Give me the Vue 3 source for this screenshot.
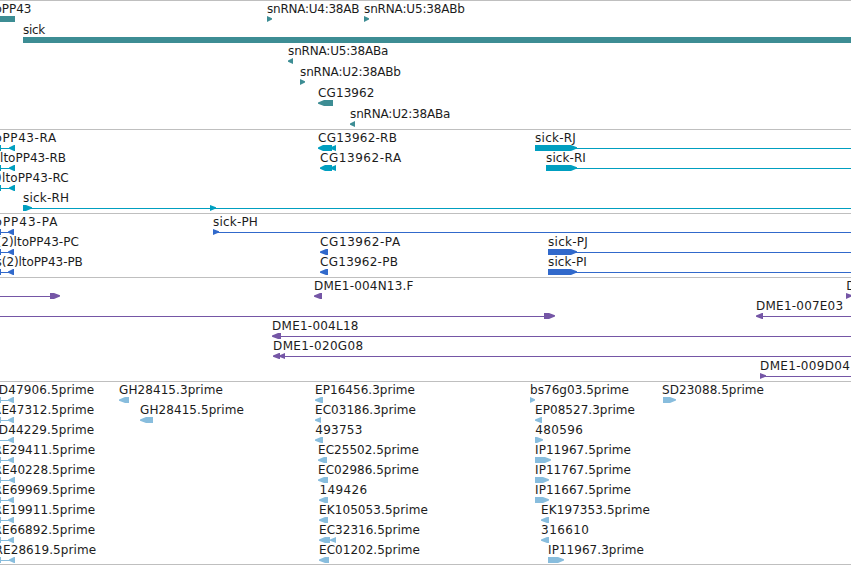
<template>
    <main class="browser">
        <section v-for="track in tracks" :key="track.name" class="track" :class="track.name">
            <svg :width="WIDTH" :height="track.height" :viewBox="`0 ${track.top} ${WIDTH} ${track.height}`">
                <g v-for="(f, i) in track.features" :key="i">
                    <path v-for="(s, j) in f.shapes" :key="j" :d="shapePath(s, track.base + f.row * track.pitch)" />
                    <text
                        v-if="f.label"
                        :x="f.from - 0.4"
                        :y="track.base + f.row * track.pitch"
                        :textLength="f.to - f.from + 0.8"
                    >{{ f.label }}</text>
                </g>
            </svg>
        </section>
    </main>
</template>

<script setup>
const WIDTH = 851

// shapes: [type, start, end, head length]
// types: box | line | right | left
const feature = (row, label, from, to, ...shapes) => ({ row, label, from, to, shapes })

// intron line that enters from the left edge
const tail = (end) => [['box', 0, 1], ['line', 0, end - 5], ['left', end - 6, end, 5]]

function shapePath([type, a, b, head = 4], baseline) {
    const top = baseline + 3
    const bottom = top + 6
    const mid = top + 3
    if (type === 'line') return `M${a} ${mid}H${b}V${mid + 1}H${a}Z`
    if (type === 'right') return `M${a} ${top}H${b - head}L${b} ${mid - 0.8}V${mid + 0.4}L${b - head} ${bottom}H${a}Z`
    if (type === 'left') return `M${b} ${top}H${a + head}L${a} ${mid - 0.4}V${mid + 0.8}L${a + head} ${bottom}H${b}Z`
    return `M${a} ${top}H${b}V${bottom}H${a}Z`
}

const tracks = [
    {
        name: 'genes', top: 1, height: 128, base: 13, pitch: 21,
        features: [
            feature(0, 'oPP43', -5, 31, ['box', 0, 15]),
            feature(0, 'snRNA:U4:38AB', 267.5, 359, ['right', 267, 272, 5]),
            feature(0, 'snRNA:U5:38ABb', 364.5, 464.5, ['right', 364, 369, 5]),
            feature(1, 'sick', 23.5, 44.7, ['box', 23, WIDTH]),
            feature(2, 'snRNA:U5:38ABa', 288.5, 388, ['left', 288, 293, 5]),
            feature(3, 'snRNA:U2:38ABb', 300.5, 400.5, ['right', 300, 305, 5]),
            feature(4, 'CG13962', 318.5, 374, ['left', 318, 333, 6]),
            feature(5, 'snRNA:U2:38ABa', 350.5, 450, ['left', 350, 355, 5]),
        ],
    },
    {
        name: 'transcripts', top: 130, height: 83, base: 142, pitch: 20,
        features: [
            feature(0, 'oPP43-RA', -5, 55.7, ...tail(15)),
            feature(1, 'ltoPP43-RB', 0.5, 65.6, ...tail(15)),
            feature(2, ')ltoPP43-RC', -2.5, 68.3, ...tail(15)),
            feature(3, 'sick-RH', 23.5, 68.7, ['right', 23, 32, 6], ['line', 30, WIDTH], ['right', 210, 216, 6]),
            feature(0, 'CG13962-RB', 318.5, 396.5, ['left', 318, 332, 5], ['left', 330, 336, 6]),
            feature(1, 'CG13962-RA', 320.5, 400.7, ['left', 320, 332, 5], ['left', 330, 336, 6]),
            feature(0, 'sick-RJ', 535.5, 575.5, ['right', 535, 577, 6], ['line', 575, WIDTH]),
            feature(1, 'sick-RI', 546.5, 585.5, ['right', 546, 577, 6], ['line', 575, WIDTH]),
        ],
    },
    {
        name: 'proteins', top: 214, height: 63, base: 226, pitch: 20,
        features: [
            feature(0, 'oPP43-PA', -5, 57, ...tail(14)),
            feature(1, '(2)ltoPP43-PC', -3, 78.4, ...tail(14)),
            feature(2, 's(2)ltoPP43-PB', -4, 82.4, ...tail(14)),
            feature(0, 'sick-PH', 213.5, 257.5, ['right', 213, 219, 6], ['line', 217, WIDTH]),
            feature(1, 'CG13962-PA', 320.5, 399.7, ['left', 320, 328, 6]),
            feature(2, 'CG13962-PB', 320.5, 397.5, ['left', 320, 328, 6]),
            feature(1, 'sick-PJ', 548.5, 587.5, ['right', 548, 577, 6], ['line', 575, WIDTH]),
            feature(2, 'sick-PI', 548.5, 586.5, ['right', 548, 577, 6], ['line', 575, WIDTH]),
        ],
    },
    {
        name: 'bacs', top: 278, height: 103, base: 290, pitch: 20,
        features: [
            feature(0, '', 0, 0, ['line', 0, 51], ['right', 50, 60, 6]),
            feature(0, 'DME1-004N13.F', 314.5, 413, ['left', 314, 322, 6]),
            feature(0, 'D', 846.7, 855, ['right', 846, 852, 6]),
            feature(1, '', 0, 0, ['line', 0, 545], ['right', 544, 555, 6]),
            feature(1, 'DME1-007E03', 756.5, 842.7, ['left', 756, 763, 6], ['line', 762, WIDTH]),
            feature(2, 'DME1-004L18', 272.5, 358, ['left', 272, 281, 6], ['line', 280, WIDTH]),
            feature(3, 'DME1-020G08', 273.5, 362.7, ['left', 273, 280, 6], ['left', 279, 285, 6], ['line', 283, WIDTH]),
            feature(4, 'DME1-009D04', 760.5, 849.5, ['right', 760, 766, 6], ['line', 764, WIDTH]),
        ],
    },
    {
        name: 'ests', top: 382, height: 182, base: 394, pitch: 20,
        features: [
            feature(0, 'D47906.5prime', -0.8, 93.7, ...tail(14)),
            feature(1, 'RE47312.5prime', -6.5, 93.7, ...tail(14)),
            feature(2, 'D44229.5prime', -0.8, 93.7, ['line', 0, 9], ['left', 8, 14, 5]),
            feature(3, 'RE29411.5prime', -6, 94.7, ...tail(14)),
            feature(4, 'RE40228.5prime', -6, 94.7, ...tail(15)),
            feature(5, 'RE69969.5prime', -6, 94.7, ...tail(14)),
            feature(6, 'RE19911.5prime', -6, 94.7, ...tail(14)),
            feature(7, 'RE66892.5prime', -6, 94.7, ...tail(14)),
            feature(8, 'RE28619.5prime', -5, 95.7, ...tail(15)),

            feature(0, 'GH28415.3prime', 119.5, 222.5, ['left', 119, 129, 6]),
            feature(1, 'GH28415.5prime', 140.5, 243.5, ['left', 140, 153, 6]),

            feature(0, 'EP16456.3prime', 315.5, 414.5, ['left', 315, 323, 6]),
            feature(1, 'EC03186.3prime', 315.5, 415.5, ['left', 315, 321, 6]),
            feature(2, '493753', 315.7, 362, ['left', 315, 323, 6]),
            feature(3, 'EC25502.5prime', 318.5, 418.5, ['left', 318, 327, 6]),
            feature(4, 'EC02986.5prime', 318.5, 418.5, ['left', 318, 328, 6]),
            feature(5, '149426', 320, 366.7, ['left', 319, 328, 6]),
            feature(6, 'EK105053.5prime', 319.5, 427.5, ['left', 319, 328, 6]),
            feature(7, 'EC32316.5prime', 319.5, 419.5, ['left', 319, 330, 6], ['left', 330, 336, 6]),
            feature(8, 'EC01202.5prime', 319.5, 419.5, ['left', 319, 329, 6]),

            feature(0, 'bs76g03.5prime', 530.5, 628.5, ['right', 530, 535, 5]),
            feature(1, 'EP08527.3prime', 535.5, 634.5, ['left', 535, 542, 6]),
            feature(2, '480596', 535.7, 582.5, ['right', 535, 543, 6]),
            feature(3, 'IP11967.5prime', 535.5, 630.5, ['right', 535, 551, 6]),
            feature(4, 'IP11767.5prime', 535.5, 630.5, ['right', 535, 549, 6]),
            feature(5, 'IP11667.5prime', 535.5, 630.5, ['right', 535, 549, 6]),
            feature(6, 'EK197353.5prime', 541.5, 649.5, ['left', 541, 549, 6]),
            feature(7, '316610', 541.5, 588.5, ['left', 541, 549, 6]),
            feature(8, 'IP11967.3prime', 548.5, 643.5, ['right', 548, 564, 6]),

            feature(0, 'SD23088.5prime', 662.5, 763.5, ['right', 663, 676, 6]),
        ],
    },
]
</script>

<style>
body {
    margin: 0;
    background: #fff;
}
</style>

<style scoped>
.browser {
    display: flex;
    flex-direction: column;
    width: 851px;
    height: 565px;
    overflow: hidden;
    background: #fff;
}

.track {
    flex: none;
    border-top: 1px solid #bfbfbf;
}

.track:last-child {
    border-bottom: 1px solid #bfbfbf;
}

.track svg {
    display: block;
    overflow: hidden;
}

.track text {
    font-family: "DejaVu Sans", "Noto Sans", sans-serif;
    font-size: 12px;
    fill: #1c1c1c;
}

/* colores por pista */
.genes {
    fill: #3d8d94;
}

.transcripts {
    fill: #009fc0;
}

.proteins {
    fill: #3169cb;
}

.bacs {
    fill: #7556a6;
}

.ests {
    fill: #88bddd;
}
</style>
